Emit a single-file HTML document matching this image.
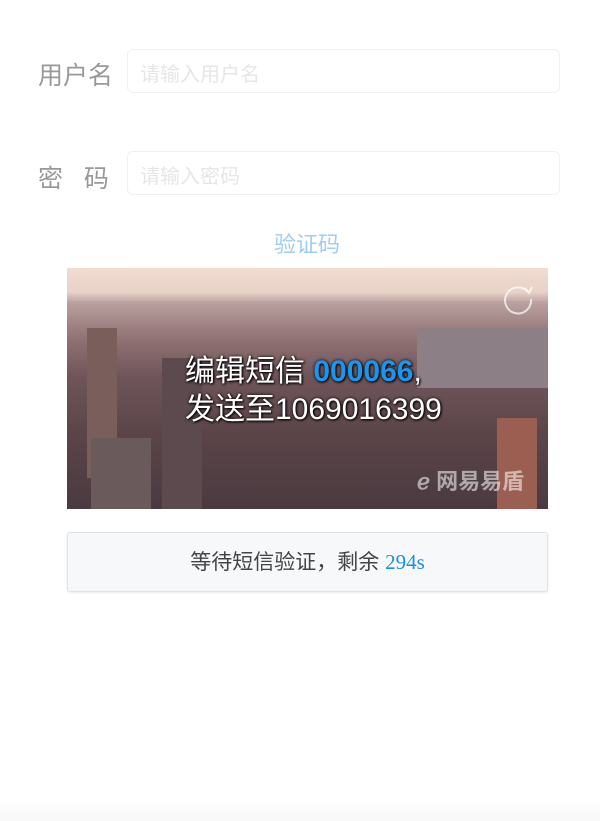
<!DOCTYPE html>
<html><head><meta charset="utf-8"><style>
body{margin:0;width:600px;height:821px;background:#fff;position:relative;overflow:hidden;font-family:"Liberation Sans","Noto Sans CJK SC",sans-serif}
.lbl{position:absolute;left:38px;font-size:25px;color:#999}
.inp{position:absolute;left:127px;width:433px;height:44px;border:1px solid #f0f0f0;border-radius:6px;box-sizing:border-box;font-size:20px;color:#e6e6e6;padding:8px 0 0 12px}
.img{position:absolute;left:67px;top:268px;width:481px;height:241px;overflow:hidden;
background:linear-gradient(180deg,#f1dcd0 0%,#e8d2c9 10%,#b59a98 15%,#9a7a7c 25%,#6f5559 45%,#5a4448 70%,#4a3a40 100%)}
.t{position:absolute;left:118px;color:#fff;font-size:30px;line-height:40px;text-shadow:0 0 3px #000,1px 1px 2px #000;white-space:nowrap}
.btn{position:absolute;left:67px;top:532px;width:481px;height:60px;box-sizing:border-box;border:1px solid #dfe3e8;border-radius:3px;background:#f7f8fa;text-align:center;line-height:58px;font-size:21px;color:#444;box-shadow:0 1px 2px rgba(0,0,0,.08)}
</style></head><body>
<div class="lbl" style="top:56px">用户名</div>
<div class="inp" style="top:49px">请输入用户名</div>
<div class="lbl" style="top:159px">密&nbsp;&nbsp;&nbsp;码</div>
<div class="inp" style="top:151px">请输入密码</div>
<div style="position:absolute;left:7px;width:600px;top:227px;text-align:center;font-size:22px;color:#9fcdf6">验证码</div>
<div class="img">
 <div style="position:absolute;left:0;top:35px;width:481px;height:40px;background:linear-gradient(180deg,rgba(190,170,170,.3),rgba(140,110,110,.2))"></div>
 <div style="position:absolute;left:20px;top:60px;width:30px;height:150px;background:#7a5e5c"></div>
 <div style="position:absolute;left:95px;top:90px;width:40px;height:151px;background:#5c4a4e"></div>
 <div style="position:absolute;left:24px;top:170px;width:60px;height:71px;background:#6a5a5c"></div>
 <div style="position:absolute;left:350px;top:60px;width:131px;height:60px;background:#8d7f86"></div>
 <div style="position:absolute;left:430px;top:150px;width:40px;height:91px;background:#9a5f50"></div>
 <svg style="position:absolute;left:434px;top:14px" width="34" height="34" viewBox="0 0 34 34"><path d="M27 10 A13 13 0 1 0 30 17" fill="none" stroke="rgba(255,255,255,.7)" stroke-width="2"/><path d="M24 6 L28 11 L31 5" fill="none" stroke="rgba(255,255,255,.7)" stroke-width="2"/></svg>
 <div class="t" style="top:84px">编辑短信 <span style="color:#1a96f0;font-weight:bold">000066</span>,</div>
 <div class="t" style="top:122px">发送至1069016399</div>
 <div style="position:absolute;left:350px;top:196px;color:rgba(255,255,255,.55);font-size:22px;font-weight:bold">ℯ 网易易盾</div>
</div>
<div class="btn">等待短信验证，剩余 <span style="color:#1a8fe8;font-family:'Liberation Serif',serif">294s</span></div>
<div style="position:absolute;left:0;top:800px;width:600px;height:21px;background:linear-gradient(#fff,#f7f7f7)"></div>
</body></html>
